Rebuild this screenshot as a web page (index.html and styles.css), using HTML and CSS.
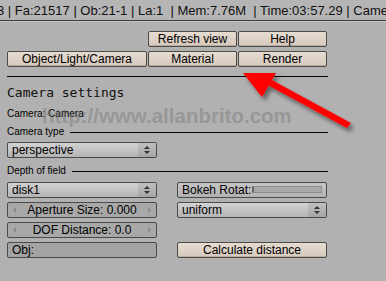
FILE: index.html
```html
<!DOCTYPE html>
<html lang="en">
<head>
    <meta charset="UTF-8">
    <title>Camera settings</title>
    <link rel="stylesheet" href="styles.css">
</head>
<body>
    <div class="header">3 | Fa:21517 | Ob:21-1 | La:1 &nbsp;| Mem:7.76M &nbsp;| Time:03:57.29 | Camera</div>
    <div class="panel">
        <div class="row row-top">
            <div class="btn w89">Refresh view</div>
            <div class="btn w89">Help</div>
        </div>
        <div class="row row-tabs">
            <div class="btn w140">Object/Light/Camera</div>
            <div class="btn w89">Material</div>
            <div class="btn w89">Render</div>
        </div>
        <div class="rule"></div>
        <h2 class="title">Camera settings</h2>
        <div class="label">Camera: Camera</div>
        <div class="section"><span>Camera type</span><i></i></div>
        <div class="menu">perspective<b class="updown"></b></div>
        <div class="section dof"><span>Depth of field</span><i></i></div>
        <div class="grid">
            <div class="menu">disk1<b class="updown"></b></div>
            <div class="field slider">Bokeh Rotat:<span class="track"></span></div>
            <div class="field num"><b class="arr l"></b>Aperture Size: 0.000<b class="arr r"></b></div>
            <div class="menu">uniform<b class="updown"></b></div>
            <div class="field num"><b class="arr l"></b>DOF Distance: 0.0<b class="arr r"></b></div>
            <div></div>
            <div class="field text">Obj:</div>
            <div class="btn">Calculate distance</div>
        </div>
    </div>
    <div class="watermark">http://www.allanbrito.com</div>
    <svg class="arrow" width="130" height="70" viewBox="0 0 130 70">
        <defs>
            <filter id="sh" x="-20%" y="-20%" width="140%" height="140%">
                <feGaussianBlur in="SourceAlpha" stdDeviation="2"/>
                <feOffset dx="3" dy="4"/>
                <feComponentTransfer><feFuncA type="linear" slope="0.45"/></feComponentTransfer>
                <feMerge><feMergeNode/><feMergeNode in="SourceGraphic"/></feMerge>
            </filter>
        </defs>
        <g filter="url(#sh)" fill="#ff0000">
            <polygon points="3,2 36,2 22,26"/>
            <polygon points="24,12 30,8 111,52 107,57"/>
        </g>
    </svg>
</body>
</html>
```

FILE: styles.css
```css
body {
    margin: 0;
    background: #b1b1b1;
    font-family: "Liberation Sans", Arial, sans-serif;
    font-size: 12px;
    color: #000;
    overflow: hidden;
    position: relative;
    height: 281px;
}

.header {
    height: 20px;
    line-height: 21px;
    margin-left: -3px;
    font-size: 13px;
    white-space: nowrap;
    overflow: hidden;
    color: #111;
    background: #b5b5b5;
    border-bottom: 1px solid #3a3a3a;
    box-shadow: 0 1px 0 #c8c8c8;
}

.panel {
    width: 320px;
    padding: 10px 0 0 7px;
}

.row {
    display: flex;
    gap: 1px;
}

.row-top {
    margin-left: 141px;
}

.row-tabs {
    margin-top: 4px;
}

.btn {
    box-sizing: border-box;
    height: 16px;
    line-height: 14px;
    text-align: center;
    font-size: 12px;
    border: 1px solid #4e4a46;
    border-radius: 2px;
    background: linear-gradient(#e6dcd2, #d6c8bc);
    box-shadow: inset 0 -1px 0 #b9aca0;
}

.w89 { width: 89px; }
.w140 { width: 140px; }

.rule {
    height: 1px;
    background: #000;
    margin-top: 9px;
    width: 321px;
}

.title {
    margin: 9px 0 0 0;
    font-family: "DejaVu Sans Mono", monospace;
    font-weight: normal;
    font-size: 13px;
    line-height: 14px;
    color: #111;
}

.label {
    margin: 8px 0 0 0;
    font-size: 10px;
    line-height: 12px;
}

.section {
    display: flex;
    align-items: center;
    gap: 6px;
    margin: 6px 0 0 0;
    width: 321px;
    font-size: 10px;
    line-height: 12px;
}

.section i {
    flex: 1;
    height: 1px;
    background: #000;
}

.section.dof {
    margin-top: 7px;
}

.menu,
.field {
    box-sizing: border-box;
    position: relative;
    height: 16px;
    line-height: 14px;
    font-size: 12px;
    padding-left: 4px;
    border: 1px solid #4a4a4a;
    border-radius: 2px;
    white-space: nowrap;
    overflow: hidden;
}

.menu {
    width: 150px;
    background: linear-gradient(#d2d2d2, #b4b4b4);
}

.panel > .menu {
    margin-top: 4px;
}

.updown {
    position: absolute;
    right: 0;
    top: 0;
    width: 18px;
    height: 14px;
    background: linear-gradient(#c0c0c0, #a6a6a6);
}

.updown::before,
.updown::after {
    content: "";
    position: absolute;
    left: 6px;
    border-left: 3px solid transparent;
    border-right: 3px solid transparent;
}

.updown::before {
    top: 3px;
    border-bottom: 3px solid #333;
}

.updown::after {
    top: 8px;
    border-top: 3px solid #333;
}

.grid {
    display: grid;
    grid-template-columns: 150px 150px;
    column-gap: 20px;
    row-gap: 4px;
    margin-top: 5px;
}

.grid > div {
    height: 16px;
}

.field {
    background: #a8a8a8;
}

.num {
    text-align: center;
    padding: 0;
}

.arr {
    position: absolute;
    top: 4px;
    border-top: 3px solid transparent;
    border-bottom: 3px solid transparent;
}

.arr.l {
    left: 5px;
    border-right: 3px solid #888;
}

.arr.r {
    right: 5px;
    border-left: 3px solid #888;
}

.slider {
    background: linear-gradient(#c6c6c6, #b2b2b2);
}

.track {
    position: absolute;
    left: 74px;
    right: 4px;
    top: 3px;
    height: 5px;
    border: 1px solid #8c8c8c;
    border-left: 2px solid #666;
    background: #a9a9a9;
}

.text {
    background: #a4a4a4;
}

.watermark {
    position: absolute;
    left: 42px;
    top: 104px;
    font-family: "Liberation Sans", sans-serif;
    font-weight: bold;
    font-size: 20.5px;
    color: rgba(110, 110, 110, 0.4);
    white-space: nowrap;
}

.arrow {
    position: absolute;
    left: 240px;
    top: 71px;
}
```
